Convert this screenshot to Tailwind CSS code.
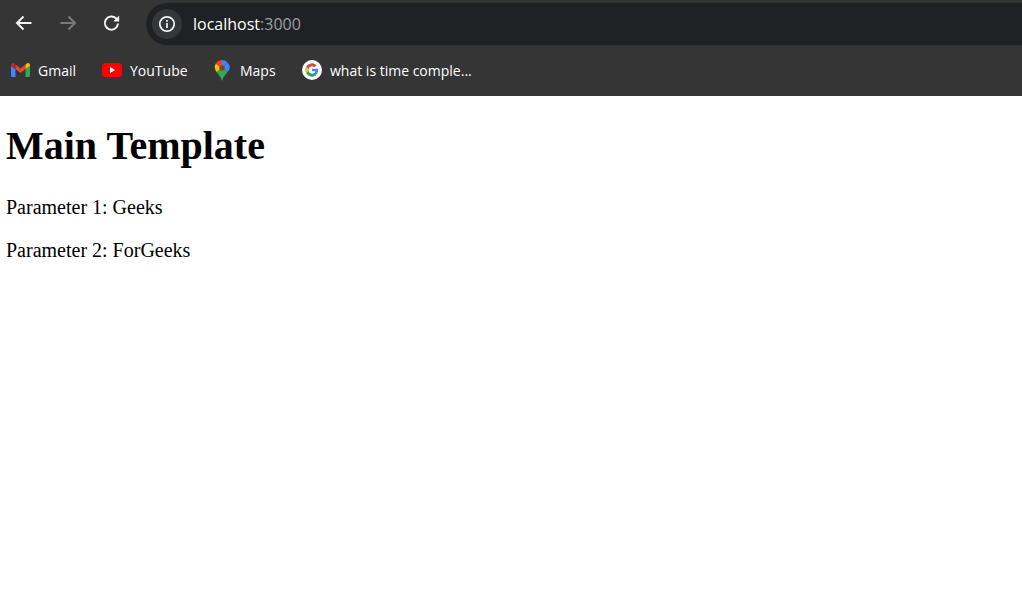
<!DOCTYPE html>
<html lang="en">

<head>
    <meta charset="UTF-8">
    <title>Main Template</title>
    <script src="https://cdn.jsdelivr.net/npm/@tailwindcss/browser@4"></script>
</head>

<body class="bg-white h-screen overflow-hidden">
    <!-- toolbar -->
    <div class="h-[45px] bg-[#353535] flex items-center font-['Open_Sans',sans-serif]">
        <div class="w-[146px] shrink-0 flex items-center pl-[14px] gap-[24px]">
            <svg class="w-5 h-5" viewBox="0 0 20 20" fill="none" stroke="#f1f3f4" stroke-width="2"><path d="M17.5 10H3M9.5 3.5 3 10l6.5 6.5" /></svg>
            <svg class="w-5 h-5" viewBox="0 0 20 20" fill="none" stroke="#77797b" stroke-width="2"><path d="M2.5 10H17M10.5 3.5 17 10l-6.5 6.5" /></svg>
            <svg class="w-5 h-5" viewBox="0 0 20 20" fill="none" stroke="#f1f3f4" stroke-width="2"><path d="M16 10.5a6.6 6.6 0 1 1-2-5.2L16.5 7.5" /><path d="M17.2 2.5v6h-6z" fill="#f1f3f4" stroke="none" /></svg>
        </div>
        <div class="flex-1 h-[42px] mt-[3px] bg-[#202124] rounded-l-[21px] flex items-center pl-[6px]">
            <div class="w-[30px] h-[30px] rounded-full bg-[#353638] flex items-center justify-center">
                <svg class="w-[18px] h-[18px]" viewBox="0 0 18 18" fill="none" stroke="#f1f3f4" stroke-width="1.7"><circle cx="9" cy="9" r="7.2" /><path d="M9 8v5M9 5v1.8" /></svg>
            </div>
            <span class="ml-[11px] text-[16px] text-white">localhost<span class="text-[#9aa0a6]">:3000</span></span>
        </div>
    </div>

    <!-- bookmarks -->
    <div class="h-[51px] bg-[#353535] flex items-center pl-[11px] pb-[1px] text-[14px] text-white font-['Open_Sans',sans-serif]">
        <div class="flex items-center gap-[8px] w-[91px]">
            <svg class="w-[19px] h-[14px]" viewBox="0 0 19 14"><path d="M0 3v9.5A1.5 1.5 0 0 0 1.5 14H4.500V6z" fill="#4285f4" /><path d="M14.500 14h3A1.500 1.500 0 0 0 19 12.500V3l-4.500 3z" fill="#34a853" /><path d="M4.500 6v-4.500L9.500 5.500l5-4v4.500L9.500 10z" fill="#ea4335" /><path d="M0 3 4.500 6V1.500L3 .4C1.700-.5 0 .5 0 2z" fill="#c5221f" /><path d="M14.500 1.500V6L19 3V2c0-1.500-1.700-2.500-3-1.600z" fill="#fbbc04" /></svg>
            <span>Gmail</span>
        </div>
        <div class="flex items-center gap-[8px] w-[112px]">
            <svg class="w-[20px] h-[14px]" viewBox="0 0 20 14"><rect width="20" height="14" rx="3.500" fill="#ff0000" /><path d="M8 4v6l5.200-3z" fill="#fff" /></svg>
            <span>YouTube</span>
        </div>
        <div class="flex items-center gap-[10px] w-[88px]">
            <svg class="w-[16px] h-[21px]" viewBox="0 0 16 21"><path d="M8 21C7 17 4.500 15 2.500 12L8 8z" fill="#34a853" /><path d="M8 21c1-4 3.500-6 5.500-9L8 8z" fill="#34a853" /><path d="M2.500 12C.5 9 0 6 1.800 3.500L8 8z" fill="#fbbc04" /><path d="M1.800 3.500C3 1.500 5.500 0 8 0v8z" fill="#ea4335" /><path d="M8 0c2 0 4 .8 5.500 2.500L8 8z" fill="#4285f4" /><path d="M13.500 2.500C16.500 6 16.500 9 13.500 12L8 8z" fill="#4285f4" /><circle cx="8" cy="8" r="2.800" fill="#7a4a20" /></svg>
            <span>Maps</span>
        </div>
        <div class="flex items-center gap-[8px]">
            <div class="w-5 h-5 rounded-full bg-white flex items-center justify-center">
                <svg class="w-[14px] h-[14px]" viewBox="0 0 48 48"><path d="M44.500 20H24v8.500h11.800C34.700 33.900 30.100 37 24 37c-7.200 0-13-5.800-13-13s5.800-13 13-13c3.100 0 5.900 1.100 8.100 2.900l6.400-6.400C34.600 4.100 29.600 2 24 2 11.800 2 2 11.800 2 24s9.800 22 22 22c11 0 21-8 21-22 0-1.300-.2-2.700-.5-4z" fill="#4285f4" /><path d="M5 13.700l7 5.100C13.800 14.300 18.500 11 24 11c3.100 0 5.900 1.100 8.100 2.900l6.400-6.400C34.600 4.100 29.600 2 24 2 15.600 2 8.500 6.700 5 13.700z" fill="#ea4335" /><path d="M24 46c5.500 0 10.400-1.900 14.200-5.100l-6.600-5.400C29.500 37 26.900 37 24 37c-5.600 0-10.400-3.500-12.200-8.500l-7 5.400C8.200 41 15.500 46 24 46z" fill="#34a853" /><path d="M5 13.700C3 17 2 20.400 2 24s1 7 2.800 9.900l7-5.400C11.300 27.100 11 25.600 11 24s.4-3.600 1-5.200z" fill="#fbbc04" /></svg>
            </div>
            <span>what is time comple...</span>
        </div>
    </div>

    <!-- page -->
    <div class="px-[6px] font-['Liberation_Serif',serif] text-black">
        <h1 class="mt-[27px] text-[40px] leading-[46px] font-bold">Main Template</h1>
        <p class="mt-[27px] text-[20px] leading-[23px]">Parameter 1: Geeks</p>
        <p class="mt-[20px] text-[20px] leading-[23px]">Parameter 2: ForGeeks</p>
    </div>
</body>

</html>
